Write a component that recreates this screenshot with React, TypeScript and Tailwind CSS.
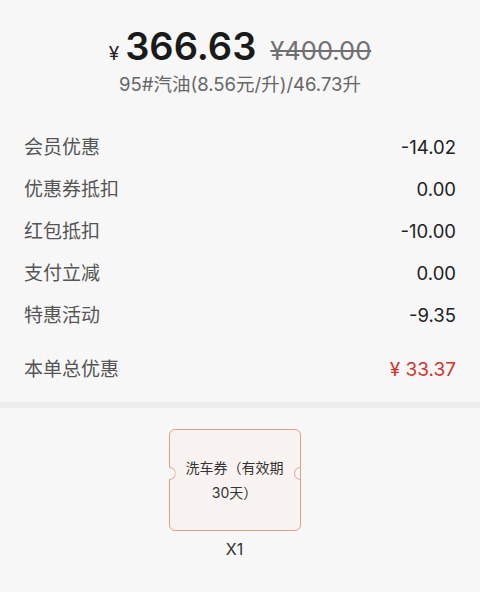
const rows = [
  { label: '会员优惠', value: '-14.02' },
  { label: '优惠券抵扣', value: '0.00' },
  { label: '红包抵扣', value: '-10.00' },
  { label: '支付立减', value: '0.00' },
  { label: '特惠活动', value: '-9.35' },
]

const font = { fontFamily: 'Inter, "Noto Sans CJK SC", sans-serif' }

function Coupon() {
  return (
    <div className="relative w-[132px] h-[102px] rounded-[6px] border border-[#e4a187] bg-[#f8f3f0] flex items-center justify-center px-3">
      <span className="absolute left-[-7px] top-[37px] w-[13px] h-[13px] rounded-full border border-[#e4a187] bg-[#f7f7f7] [clip-path:inset(0_0_0_50%)]" />
      <span className="absolute right-[-7px] top-[37px] w-[13px] h-[13px] rounded-full border border-[#e4a187] bg-[#f7f7f7] [clip-path:inset(0_50%_0_0)]" />
      <p className="text-[14px] leading-[25px] text-[#333] text-center">洗车券（有效期30天）</p>
    </div>
  )
}

export default function App() {
  return (
    <div className="w-[480px] h-[592px] bg-[#f7f7f7] overflow-hidden" style={font}>
      <section className="flex flex-col items-center pt-[20px]">
        <div className="flex items-baseline">
          <span className="text-[19px] text-[#222] mr-[6px]">¥</span>
          <span className="text-[38px] font-semibold text-[#1a1a1a] leading-[52px]">366.63</span>
          <span className="text-[25.5px] text-[#707070] line-through ml-[14px]">¥400.00</span>
        </div>
        <p className="text-[18.5px] text-[#666] leading-[24px]">95#汽油(8.56元/升)/46.73升</p>
      </section>

      <section className="px-[24px] pt-[31px]">
        {rows.map((r) => (
          <div key={r.label} className="flex justify-between items-center h-[42px]">
            <span className="text-[19px] text-[#555]">{r.label}</span>
            <span className="text-[18.5px] text-[#222]">{r.value}</span>
          </div>
        ))}
        <div className="flex justify-between items-center h-[42px] mt-[12px]">
          <span className="text-[19px] text-[#555]">本单总优惠</span>
          <span className="text-[19px] text-[#d2332b]">¥ 33.37</span>
        </div>
      </section>

      <div className="h-[6px] bg-[#ececec] mt-[11px]" />

      <section className="flex flex-col items-center pt-[21px] pr-[11px]">
        <Coupon />
        <span className="text-[16px] text-[#333] mt-[6px]">X1</span>
      </section>
    </div>
  )
}
